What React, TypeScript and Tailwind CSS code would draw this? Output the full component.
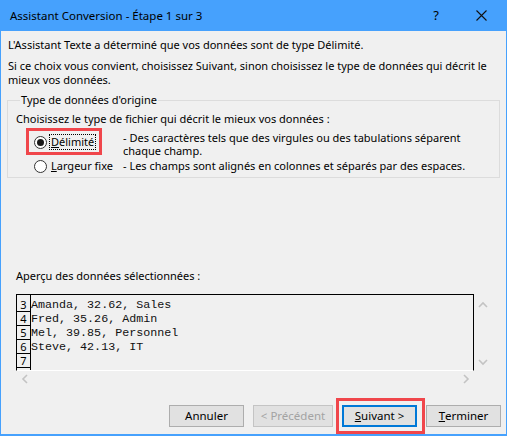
import React from "react";

const ui = "font-['Noto_Sans',sans-serif]";

function Radio({ checked }: { checked?: boolean }) {
  return (
    <span className="flex h-[13px] w-[13px] shrink-0 items-center justify-center rounded-full border border-[#333] bg-white">
      {checked ? <span className="h-[7px] w-[7px] rounded-full bg-[#1a1a1a]" /> : null}
    </span>
  );
}

function Chevron({ dir }: { dir: "up" | "down" | "left" | "right" }) {
  const d = {
    up: "M1 6 L5 2 L9 6",
    down: "M1 2 L5 6 L9 2",
    left: "M6 1 L2 5 L6 9",
    right: "M2 1 L6 5 L2 9",
  }[dir];
  const vertical = dir === "up" || dir === "down";
  return (
    <svg
      width={vertical ? 10 : 8}
      height={vertical ? 8 : 10}
      viewBox={vertical ? "0 0 10 8" : "0 0 8 10"}
      fill="none"
      stroke="#c3c3c3"
      strokeWidth="1.6"
    >
      <path d={d} />
    </svg>
  );
}

function Btn({
  children,
  disabled,
  primary,
  className = "",
}: {
  children: React.ReactNode;
  disabled?: boolean;
  primary?: boolean;
  className?: string;
}) {
  return (
    <button
      type="button"
      className={`flex h-[22px] items-center justify-center bg-[#e1e1e1] text-[11.5px] leading-none ${
        primary
          ? "border-2 border-[#0078d7] text-black"
          : disabled
            ? "border border-[#c4c4c4] text-[#a3a3a3]"
            : "border border-[#adadad] text-black"
      } ${className}`}
    >
      {children}
    </button>
  );
}

const rows = [
  ["3", "Amanda, 32.62, Sales"],
  ["4", "Fred, 35.26, Admin"],
  ["5", "Mel, 39.85, Personnel"],
  ["6", "Steve, 42.13, IT"],
  ["7", ""],
  ["", ""],
];

export default function App() {
  return (
    <div className={`flex h-[436px] w-[507px] flex-col bg-[#46a1fd] px-px pb-[2px] text-black ${ui}`}>
      {/* title bar */}
      <div className="flex h-[31px] shrink-0 items-center pl-[9px] text-[11.5px]">
        <span className="flex-1">Assistant Conversion - Étape 1 sur 3</span>
        <span className="mr-[37px] text-[13px]">?</span>
        <svg width="11" height="11" viewBox="0 0 11 11" className="mr-[19px]" stroke="#111" strokeWidth="1.1">
          <path d="M0.5 0.5 L10.5 10.5 M10.5 0.5 L0.5 10.5" />
        </svg>
      </div>

      <div className="flex flex-1 flex-col bg-[#f0f0f0] text-[11px]">
        <p className="mt-[7px] pl-[7px] leading-[14px]">
          L'Assistant Texte a déterminé que vos données sont de type Délimité.
        </p>
        <p className="mt-[7px] pl-[7px] leading-[14px]">
          <span className="whitespace-nowrap">
            Si ce choix vous convient, choisissez Suivant, sinon choisissez le type de données qui décrit le
          </span>
          <br />
          mieux vos données.
        </p>

        <fieldset className="ml-[6px] mt-[6px] w-[493px] border border-[#dcdcdc] pb-[4px] pl-[8px]">
          <legend className="ml-[4px] px-px leading-[14px]">Type de données d'origine</legend>
          <p className="mt-[5px] leading-[14px]">Choisissez le type de fichier qui décrit le mieux vos données :</p>

          <div className="mt-[5px] flex items-start">
            <div className="relative flex h-[22px] w-[107px] shrink-0 items-center pl-[18px]">
              <Radio checked />
              <span className="ml-[3px] px-px leading-[14px] outline-1 outline-dotted outline-black">
                <span className="underline">D</span>élimité
              </span>
              <span className="absolute left-[10px] top-[-3px] h-[27px] w-[76px] border-[3px] border-[#f0464b]" />
            </div>
            <p className="leading-[13px]">
              - Des caractères tels que des virgules ou des tabulations séparent
              <br />
              chaque champ.
            </p>
          </div>

          <div className="mt-[2px] flex h-[14px] items-center">
            <div className="flex w-[107px] shrink-0 items-center pl-[18px]">
              <Radio />
              <span className="ml-[4px] leading-[14px]">
                <span className="underline">L</span>argeur fixe
              </span>
            </div>
            <p className="leading-[14px]">- Les champs sont alignés en colonnes et séparés par des espaces.</p>
          </div>
        </fieldset>

        <p className="mt-[91px] pl-[15px] leading-[14px]">Aperçu des données sélectionnées :</p>

        <div className="ml-[15px] mt-[11px] flex">
          <div className="flex h-[77px] w-[458px] flex-col overflow-hidden border border-black border-b-white">
            <div className="h-[3px] w-[14px] shrink-0 border-r border-black" />
            {rows.map(([n, t], i) => (
              <div key={i} className="flex h-[14px] shrink-0">
                <span className="h-[14px] w-[14px] shrink-0 overflow-hidden border-b border-r border-black text-center text-[11px] leading-[13px]">
                  {n}
                </span>
                <span className="h-[14px] whitespace-pre font-['Liberation_Mono',monospace] text-[11.7px] leading-[14px] text-[#111]">
                  {t}
                </span>
              </div>
            ))}
          </div>
          <div className="flex h-[77px] w-[18px] flex-col items-center justify-between pb-[5px] pt-[7px]">
            <Chevron dir="up" />
            <Chevron dir="down" />
          </div>
        </div>
        <div className="ml-[15px] flex h-[16px] w-[458px] items-center justify-between pl-[5px] pr-[4px]">
          <Chevron dir="left" />
          <Chevron dir="right" />
        </div>

        <div className="mt-[18px] flex justify-end gap-[9px] pr-[5px]">
          <Btn className="w-[75px]">Annuler</Btn>
          <Btn disabled className="w-[80px]">
            &lt; Précédent
          </Btn>
          <div className="relative">
            <Btn primary className="w-[75px]">
              <span className="underline">S</span>uivant &gt;
            </Btn>
            <span className="absolute left-[-6px] top-[-7px] h-[36px] w-[89px] border-[3px] border-[#f0464b]" />
          </div>
          <Btn className="w-[75px]">
            <span className="underline">T</span>erminer
          </Btn>
        </div>
      </div>
    </div>
  );
}
